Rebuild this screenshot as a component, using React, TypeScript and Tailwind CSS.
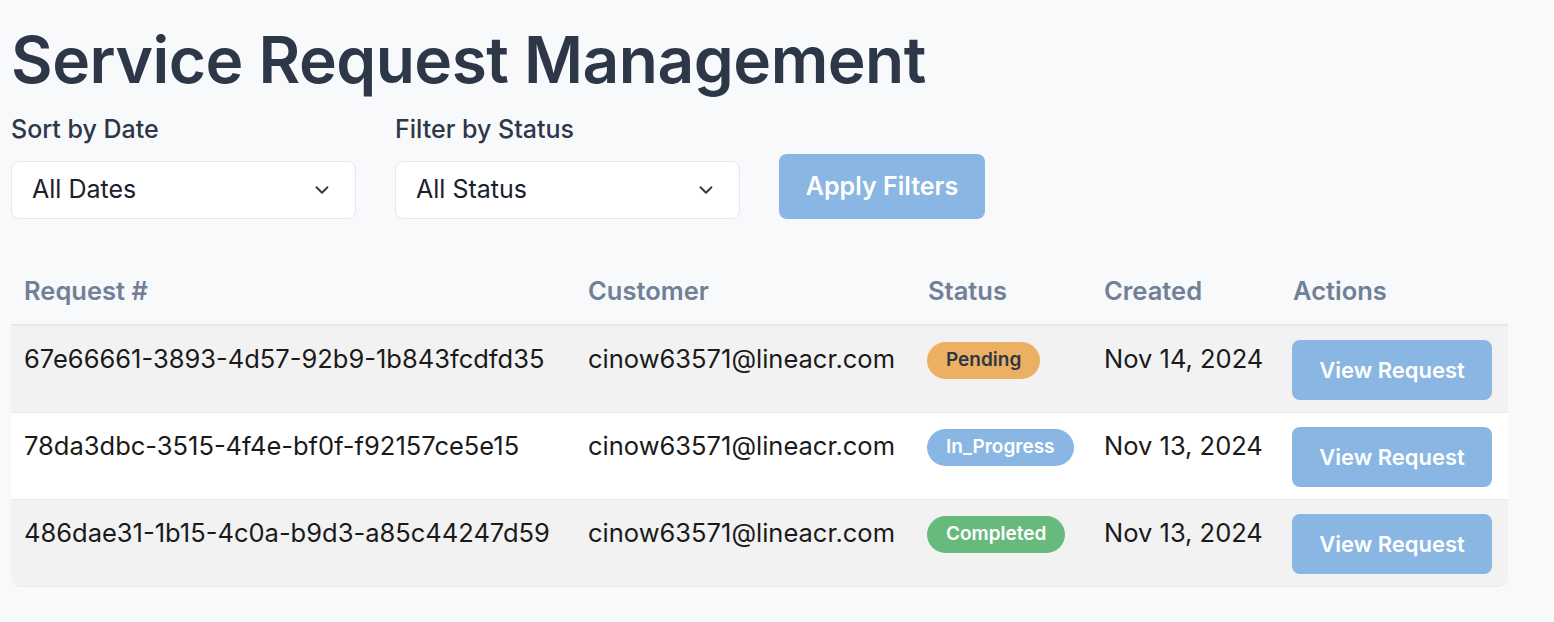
import React from 'react';

type Row = {
  id: string;
  customer: string;
  status: 'Pending' | 'In_Progress' | 'Completed';
  created: string;
};

const rows: Row[] = [
  { id: '67e66661-3893-4d57-92b9-1b843fcdfd35', customer: 'cinow63571@lineacr.com', status: 'Pending', created: 'Nov 14, 2024' },
  { id: '78da3dbc-3515-4f4e-bf0f-f92157ce5e15', customer: 'cinow63571@lineacr.com', status: 'In_Progress', created: 'Nov 13, 2024' },
  { id: '486dae31-1b15-4c0a-b9d3-a85c44247d59', customer: 'cinow63571@lineacr.com', status: 'Completed', created: 'Nov 13, 2024' },
];

const badgeStyles: Record<Row['status'], string> = {
  Pending: 'bg-[#ecb062] text-[#2d3748]',
  In_Progress: 'bg-[#89b6e3] text-white',
  Completed: 'bg-[#68b97c] text-white',
};

const Chevron = () => (
  <svg className="h-[22px] w-[22px] text-[#2d3748]" viewBox="0 0 24 24" fill="none" stroke="currentColor" strokeWidth={2} strokeLinecap="round" strokeLinejoin="round">
    <path d="M6 9l6 6 6-6" />
  </svg>
);

const SelectBox: React.FC<{ label: string; value: string }> = ({ label, value }) => (
  <div className="flex flex-col gap-[16px]">
    <label className="text-[25px] font-medium leading-[32px] text-[#2d3748]">{label}</label>
    <div className="flex h-[58px] w-[345px] items-center justify-between rounded-[8px] border border-[#e2e8f0] bg-white pl-[20px] pr-[22px]">
      <span className="text-[25px] text-[#1a202c]">{value}</span>
      <Chevron />
    </div>
  </div>
);

export default function App() {
  return (
    <div className="min-h-[622px] bg-[#f7f9fb] px-[11px] pt-[18px] font-['Inter',sans-serif] text-[#1a1a1a]">
      <h1 className="text-[64px] font-semibold leading-[84px] tracking-[-0.5px] text-[#2d3748]">Service Request Management</h1>

      <div className="mt-[11px] flex items-end gap-[39px]">
        <SelectBox label="Sort by Date" value="All Dates" />
        <SelectBox label="Filter by Status" value="All Status" />
        <button className="h-[65px] w-[206px] rounded-[8px] bg-[#89b6e3] text-[25px] font-semibold text-white">Apply Filters</button>
      </div>

      <div className="mt-[42px] w-[1497px] overflow-hidden rounded-b-[10px] border-b border-[#e2e8f0]">
        <div className="grid grid-cols-[564px_340px_176px_189px_1fr] border-b-2 border-[#e2e8f0] text-[25.5px] font-semibold text-[#718096]">
          {['Request #', 'Customer', 'Status', 'Created', 'Actions'].map((h) => (
            <div key={h} className="px-[13px] pb-[17px] pt-[14px] leading-[32px]">{h}</div>
          ))}
        </div>
        {rows.map((r, i) => (
          <div
            key={r.id}
            className={`grid grid-cols-[564px_340px_176px_189px_1fr] text-[25.5px] ${i % 2 === 0 ? 'bg-[#f2f2f2]' : 'bg-white'} ${i < rows.length - 1 ? 'border-b border-[#e2e8f0]' : ''}`}
          >
            <div className="px-[13px] pt-[15px] leading-[36px]">{r.id}</div>
            <div className="px-[13px] pt-[15px] leading-[36px]">{r.customer}</div>
            <div className="flex items-start px-[12px] pt-[16px]">
              <span className={`inline-flex h-[37px] items-center rounded-full px-[19px] text-[19px] font-semibold ${badgeStyles[r.status]}`}>{r.status}</span>
            </div>
            <div className="px-[13px] pt-[15px] leading-[36px]">{r.created}</div>
            <div className="px-[12px] pb-[12px] pt-[14px]">
              <button className="h-[60px] w-[200px] rounded-[8px] bg-[#89b6e3] text-[22px] font-semibold text-white">View Request</button>
            </div>
          </div>
        ))}
      </div>
    </div>
  );
}
